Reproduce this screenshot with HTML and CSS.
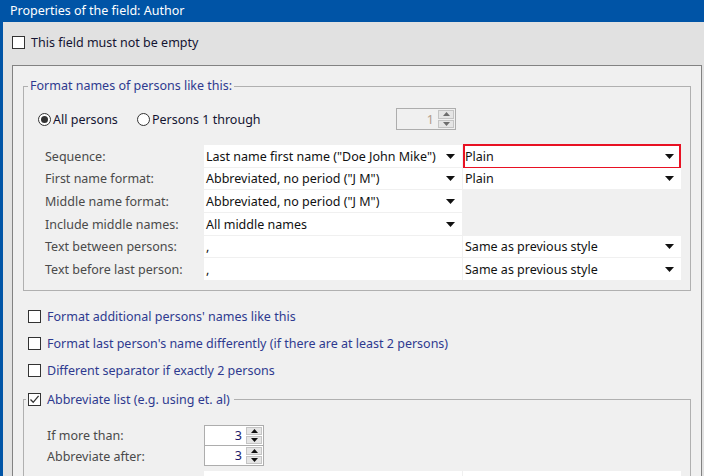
FILE: index.html
```html
<!DOCTYPE html>
<html>
<head>
<meta charset="utf-8">
<link rel="stylesheet" href="styles.css">
</head>
<body>
<div class="titlebar">Properties of the field: Author</div>
<div class="main">
  <div class="top">
    <div class="top-row"><span class="box"></span><span class="lbl-dark">This field must not be empty</span></div>
  </div>
  <div class="panel">
    <fieldset class="group g1">
      <legend class="legend1">Format names of persons like this:</legend>
      <div class="radio-row">
        <div class="radio-item"><span class="radio on"></span><span>All persons</span></div>
        <div class="radio-item"><span class="radio"></span><span>Persons 1 through</span></div>
        <div class="spin disabled">
          <span class="spin-val">1</span>
          <span class="spin-btns">
            <span class="sbtn"><svg width="7" height="4" viewBox="0 0 7 4"><path d="M0 4 L3.5 0 L7 4 Z"/></svg></span>
            <span class="sbtn"><svg width="7" height="4" viewBox="0 0 7 4"><path d="M0 0 L7 0 L3.5 4 Z"/></svg></span>
          </span>
        </div>
      </div>
      <div class="grid">
        <div class="lab">Sequence:</div>
        <div class="cell dd">Last name first name ("Doe John Mike")<svg class="arr" width="9" height="5" viewBox="0 0 9 5"><path d="M0 0 L9 0 L4.5 5 Z"/></svg></div>
        <div class="cell dd sel">Plain<svg class="arr" width="9" height="5" viewBox="0 0 9 5"><path d="M0 0 L9 0 L4.5 5 Z"/></svg></div>

        <div class="lab">First name format:</div>
        <div class="cell dd">Abbreviated, no period ("J M")<svg class="arr" width="9" height="5" viewBox="0 0 9 5"><path d="M0 0 L9 0 L4.5 5 Z"/></svg></div>
        <div class="cell dd">Plain<svg class="arr" width="9" height="5" viewBox="0 0 9 5"><path d="M0 0 L9 0 L4.5 5 Z"/></svg></div>

        <div class="lab">Middle name format:</div>
        <div class="cell dd">Abbreviated, no period ("J M")<svg class="arr" width="9" height="5" viewBox="0 0 9 5"><path d="M0 0 L9 0 L4.5 5 Z"/></svg></div>
        <div class="empty"></div>

        <div class="lab">Include middle names:</div>
        <div class="cell dd">All middle names<svg class="arr" width="9" height="5" viewBox="0 0 9 5"><path d="M0 0 L9 0 L4.5 5 Z"/></svg></div>
        <div class="empty"></div>

        <div class="lab">Text between persons:</div>
        <div class="cell">,</div>
        <div class="cell dd">Same as previous style<svg class="arr" width="9" height="5" viewBox="0 0 9 5"><path d="M0 0 L9 0 L4.5 5 Z"/></svg></div>

        <div class="lab">Text before last person:</div>
        <div class="cell">,</div>
        <div class="cell dd">Same as previous style<svg class="arr" width="9" height="5" viewBox="0 0 9 5"><path d="M0 0 L9 0 L4.5 5 Z"/></svg></div>
      </div>
    </fieldset>

    <div class="checks">
      <div class="check-row"><span class="box"></span><span class="lbl-blue">Format additional persons' names like this</span></div>
      <div class="check-row"><span class="box"></span><span class="lbl-blue">Format last person's name differently (if there are at least 2 persons)</span></div>
      <div class="check-row"><span class="box"></span><span class="lbl-blue">Different separator if exactly 2 persons</span></div>
    </div>

    <fieldset class="group g2">
      <legend class="legend2"><span class="box checked"><svg width="11" height="11" viewBox="0 0 11 11"><path d="M1.5 5.5 L4.2 8.3 L9.6 1.8" fill="none" stroke="#333" stroke-width="1.3"/></svg></span><span class="lbl-blue">Abbreviate list (e.g. using et. al)</span></legend>
      <div class="spin-grid">
        <div class="lab">If more than:</div>
        <div class="spin">
          <span class="spin-val">3</span>
          <span class="spin-btns">
            <span class="sbtn"><svg width="7" height="4" viewBox="0 0 7 4"><path d="M0 4 L3.5 0 L7 4 Z"/></svg></span>
            <span class="sbtn"><svg width="7" height="4" viewBox="0 0 7 4"><path d="M0 0 L7 0 L3.5 4 Z"/></svg></span>
          </span>
        </div>
        <div class="lab">Abbreviate after:</div>
        <div class="spin second">
          <span class="spin-val">3</span>
          <span class="spin-btns">
            <span class="sbtn"><svg width="7" height="4" viewBox="0 0 7 4"><path d="M0 4 L3.5 0 L7 4 Z"/></svg></span>
            <span class="sbtn"><svg width="7" height="4" viewBox="0 0 7 4"><path d="M0 0 L7 0 L3.5 4 Z"/></svg></span>
          </span>
        </div>
      </div>
      <div class="grid2">
        <div class="cell"></div>
        <div class="cell"></div>
      </div>
    </fieldset>
  </div>
</div>
</body>
</html>
```

FILE: styles.css
```css
* { box-sizing: border-box; }
html, body {
  margin: 0;
  padding: 0;
}
body {
  width: 704px;
  height: 476px;
  overflow: hidden;
  background: #e1e1e1;
  font-family: "Noto Sans", "Open Sans", sans-serif;
  font-size: 12.5px;
  color: #1a1a1a;
}
.titlebar {
  height: 22px;
  background: #0054a6;
  color: #ffffff;
  line-height: 22px;
  padding-left: 10px;
}
.main {
  border-left: 3px solid #0054a6;
  background: #e1e1e1;
  height: 454px;
  overflow: hidden;
}
.top {
  height: 43px;
  padding: 14px 0 0 9px;
}
.top-row {
  height: 13px;
  display: flex;
  align-items: center;
}
.box {
  width: 13px;
  height: 13px;
  border: 1px solid #333333;
  background: #ffffff;
  flex: none;
  display: inline-flex;
  align-items: center;
  justify-content: center;
  margin-right: 6px;
}
.lbl-dark { color: #141432; }
.lbl-blue { color: #2e3a8f; }
.panel {
  margin-left: 9px;
  width: 690px;
  height: 440px;
  border: 1px solid #828282;
  background: #f0f0f0;
}
.group {
  border: 1px solid #b0b0b0;
  margin: 0 10px;
  padding: 0;
  min-width: 0;
}
.g1 { margin-top: 12px; padding-bottom: 10px; }
.legend1 {
  margin-left: 4px;
  padding: 0 2px;
  line-height: 16px;
  color: #2e3a8f;
}
.radio-row {
  margin-top: 14px;
  height: 22px;
  padding-left: 14px;
  display: grid;
  grid-template-columns: 99px 259px 60px;
  align-items: center;
}
.radio-item {
  display: flex;
  align-items: center;
  color: #141432;
  padding-top: 1px;
}
.radio {
  width: 13px;
  height: 13px;
  border: 1px solid #333333;
  border-radius: 50%;
  background: #ffffff;
  margin-right: 2px;
  display: inline-flex;
  align-items: center;
  justify-content: center;
}
.radio.on::after {
  content: "";
  width: 7px;
  height: 7px;
  border-radius: 50%;
  background: #333333;
}
.spin {
  width: 60px;
  height: 22px;
  border: 1px solid #adadad;
  background: #ffffff;
  display: flex;
  align-items: stretch;
}
.spin.disabled { background: #f0f0f0; }
.spin-val {
  flex: 1;
  text-align: right;
  padding-right: 4px;
  display: flex;
  align-items: center;
  justify-content: flex-end;
  color: #1a1a6a;
}
.spin.disabled .spin-val { color: #b39c8a; }
.spin-btns {
  width: 17px;
  display: flex;
  flex-direction: column;
  padding: 1px 1px 1px 0;
  gap: 1px;
}
.sbtn {
  flex: 1;
  background: #e5e5e5;
  border: 1px solid #c4c4c4;
  display: flex;
  align-items: center;
  justify-content: center;
}
.sbtn svg path { fill: #111; }
.spin.disabled .sbtn svg path { fill: #6d6d6d; }
.grid {
  margin-top: 15px;
  padding-left: 21px;
  display: grid;
  grid-template-columns: 158px 258px 218px;
  grid-auto-rows: 21.67px;
  column-gap: 1px;
  row-gap: 1px;
}
.lab {
  color: #4a4a4a;
  display: flex;
  align-items: center;
  padding-top: 1px;
}
.cell {
  background: #ffffff;
  padding-left: 2px;
  padding-top: 1px;
  display: flex;
  align-items: center;
  color: #111111;
  position: relative;
}
.cell.dd { padding-right: 7px; }
.arr { margin-left: auto; flex: none; }
.arr path { fill: #111111; }
.cell.sel::after {
  content: "";
  position: absolute;
  left: 0;
  right: 0;
  top: -1px;
  bottom: -2px;
  border: 2px solid #e81123;
}
.checks {
  margin-top: 12px;
  padding-left: 15px;
}
.check-row {
  height: 27px;
  display: flex;
  align-items: center;
}
.g2 { margin-top: 8px; }
.legend2 {
  margin-left: 2px;
  padding: 0 4px 0 2px;
  line-height: 16px;
  display: flex;
  align-items: center;
}
.spin-grid {
  margin-top: 17px;
  padding-left: 23px;
  display: grid;
  grid-template-columns: 157px 60px;
  grid-auto-rows: 21px;
}
.spin-grid .spin { height: 21px; }
.spin-grid .spin.second { margin-top: -1px; height: 21px; }
.grid2 {
  margin-top: 4px;
  padding-left: 180px;
  display: grid;
  grid-template-columns: 258px 218px;
  grid-auto-rows: 22px;
  column-gap: 1px;
}
```
